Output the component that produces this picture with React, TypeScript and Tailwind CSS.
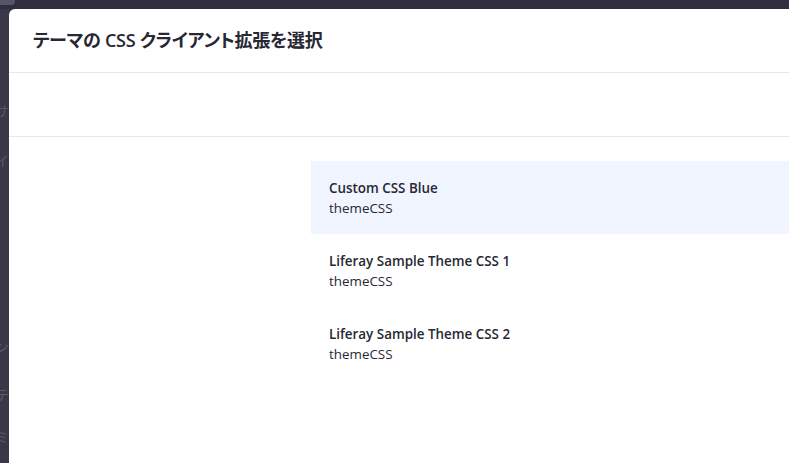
import React from "react";

const items = [
  { name: "Custom CSS Blue", type: "themeCSS", active: true },
  { name: "Liferay Sample Theme CSS 1", type: "themeCSS", active: false },
  { name: "Liferay Sample Theme CSS 2", type: "themeCSS", active: false },
];

export default function App() {
  return (
    <div
      className="relative h-[463px] w-[789px] overflow-hidden bg-[#383848]"
      style={{ fontFamily: '"Open Sans", "Noto Sans CJK JP", sans-serif' }}
    >
      {/* dimmed page behind */}
      <div className="absolute left-0 top-0 h-[9px] w-full bg-[#2f2f3d]" />
      <div className="absolute left-0 top-0 h-[5px] w-[15px] rounded-br bg-[#55556a]" />
      <div className="absolute left-[-5px] top-[100px] text-[14px] text-[#55566a]">サ</div>
      <div className="absolute left-[-5px] top-[150px] text-[14px] text-[#55566a]">イ</div>
      <div className="absolute left-[-5px] top-[336px] text-[14px] text-[#55566a]">ン</div>
      <div className="absolute left-[-5px] top-[384px] text-[14px] text-[#6a5a5a]">テ</div>
      <div className="absolute left-[-5px] top-[426px] text-[14px] text-[#55566a]">ミ</div>

      {/* modal */}
      <div className="absolute left-[9px] top-[9px] flex h-[470px] w-[800px] flex-col rounded-tl-[6px] bg-white">
        <div className="flex h-[64px] items-center border-b border-[#e7e7ed] pl-[24px]">
          <h1
            className="text-[18px] font-semibold text-[#272833]"
            style={{ fontFeatureSettings: '"palt"', letterSpacing: "-0.25px" }}
          >
            テーマの CSS クライアント拡張を選択
          </h1>
        </div>
        <div className="h-[64px] border-b border-[#e7e7ed]" />
        <div className="flex flex-1 pt-[24px]">
          <div className="w-[302px] shrink-0" />
          <ul className="flex flex-1 flex-col">
            {items.map((it) => (
              <li
                key={it.name}
                className={`flex h-[73px] flex-col justify-center pl-[18px] ${
                  it.active ? "bg-[#f0f5ff]" : ""
                }`}
              >
                <div className="text-[13.4px] font-semibold leading-[20px] text-[#272833]">
                  {it.name}
                </div>
                <div className="text-[13.4px] leading-[20px] text-[#272833]">{it.type}</div>
              </li>
            ))}
          </ul>
        </div>
      </div>
    </div>
  );
}
